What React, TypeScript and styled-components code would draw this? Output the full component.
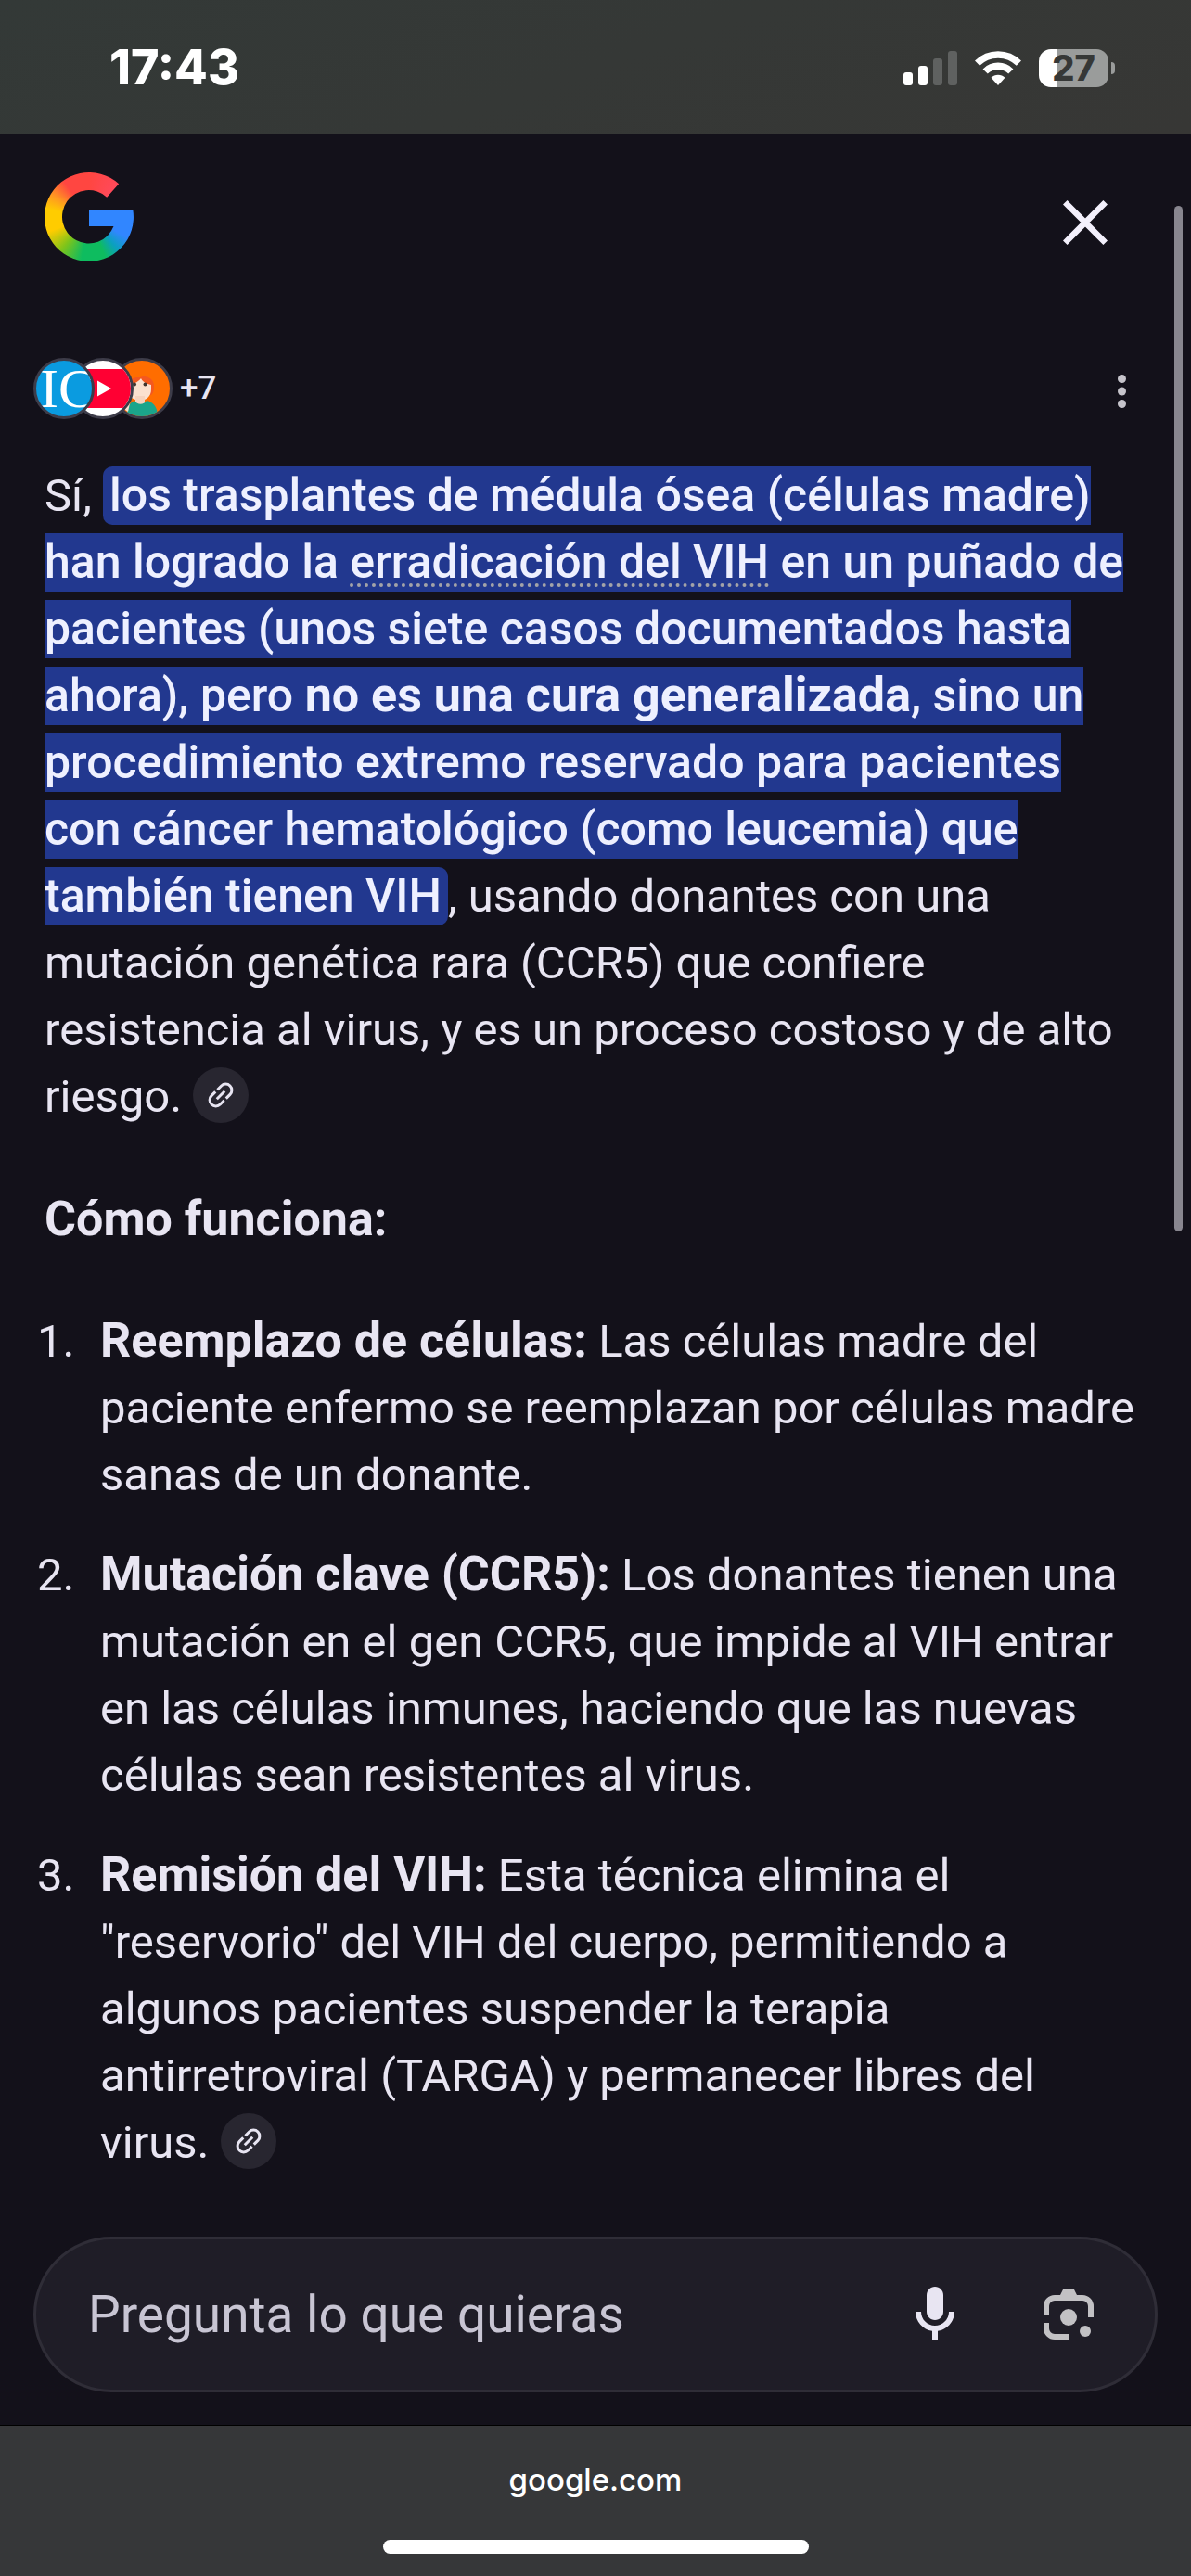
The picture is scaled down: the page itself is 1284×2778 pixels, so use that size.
import React from "react";
import styled, { createGlobalStyle } from "styled-components";

const SANS = `Roboto, "Noto Sans", "Liberation Sans", sans-serif`;
const SYSTEM = `Inter, "Liberation Sans", sans-serif`;
const INK = "#e8e5f2";
const BG = "#13111a";

const GlobalStyle = createGlobalStyle`
  *, *::before, *::after { box-sizing: border-box; }
  body { margin: 0; background: ${BG}; }
  button { padding: 0; border: 0; background: none; cursor: pointer; }
  svg { display: block; }
`;

const Page = styled.div`
  position: relative;
  display: flex;
  flex-direction: column;
  min-height: 100vh;
  background: ${BG};
  color: ${INK};
  font-family: ${SANS};
`;

const StatusBar = styled.div`
  display: flex;
  align-items: center;
  justify-content: space-between;
  height: 144px;
  padding: 2px 82px 0 118px;
  background: linear-gradient(160deg, #333937, #373735);
  color: #fff;
  font-family: ${SYSTEM};
`;

const Clock = styled.time`
  font-size: 52px;
  line-height: 60px;
  font-weight: 800;
`;

const StatusIcons = styled.div`
  display: flex;
  align-items: center;
  gap: 19px;
`;

const Battery = styled.div`
  display: flex;
  align-items: center;
  gap: 3px;
`;

const BatteryBody = styled.div`
  display: flex;
  align-items: center;
  justify-content: center;
  width: 75px;
  height: 41px;
  border-radius: 13px;
  background: linear-gradient(90deg, #fff 20px, #9a9c9b 20px);
  color: #363837;
  font-size: 38px;
  line-height: 41px;
  font-weight: 800;
`;

const BatteryCap = styled.span`
  width: 4px;
  height: 13px;
  border-radius: 0 6px 6px 0;
  background: #9a9c9b;
`;

const Header = styled.header`
  display: flex;
  align-items: flex-end;
  justify-content: space-between;
  padding: 42px 72px 0 48px;
`;

const GoogleMark = styled.a`
  display: block;
  width: 96px;
  height: 96px;
  clip-path: path("M80.100 12.300A48 48 0 1 0 95.300 40H48V58H74.500A28.700 28.700 0 1 1 67.200 26.700Z");
  background:
    linear-gradient(#3186ff, #3186ff) 48px 40px / 30px 18px no-repeat,
    conic-gradient(#ff4641 0deg, #ff4a5c 45deg, #3186ff 60deg, #3186ff 118deg,
      #0ba0c0 138deg, #0ebc5f 158deg, #0ebc5f 190deg, #7fc41a 220deg,
      #ffcc00 250deg, #ffcc00 280deg, #ff9a20 300deg, #ff4641 325deg, #ff4641 360deg);
`;

const IconButton = styled.button<{ $size: number; $color?: string }>`
  display: flex;
  align-items: center;
  justify-content: center;
  flex: none;
  width: ${(p) => p.$size}px;
  height: ${(p) => p.$size}px;
  color: ${(p) => p.$color ?? INK};
`;

const Sources = styled.div`
  display: flex;
  align-items: flex-end;
  justify-content: space-between;
  padding: 104px 45px 0 36px;
`;

const SourceGroup = styled.button`
  display: flex;
  align-items: center;
  color: ${INK};
  font-family: ${SANS};
`;

const Avatar = styled.span<{ $bg: string; $order: number }>`
  position: relative;
  z-index: ${(p) => p.$order};
  display: flex;
  align-items: center;
  width: 66px;
  height: 66px;
  margin-right: -24px;
  border: 3px solid #3d3c49;
  border-radius: 50%;
  overflow: hidden;
  background: ${(p) => p.$bg};
`;

const Monogram = styled.span`
  padding-left: 4px;
  color: #fff;
  font-family: "Liberation Serif", serif;
  font-size: 60px;
  line-height: 60px;
`;

const MoreCount = styled.span`
  margin-left: 32px;
  font-size: 35px;
  line-height: 42px;
  font-weight: 500;
`;

const Answer = styled.main`
  flex: 1;
  padding: 47px 48px 65px;
  font-size: 49px;
  line-height: 72px;
`;

const Paragraph = styled.p`
  margin: 0;
`;

const Highlight = styled.mark`
  padding: 2px 7px 3px;
  border-radius: 10px;
  background: #22388f;
  color: #eef0ff;
  font-size: 50px;
  line-height: 1;
  font-weight: 500;
`;

const Term = styled.a`
  color: inherit;
  text-decoration: underline dotted #a3a3a8 4px;
  text-underline-offset: 6px;
  text-decoration-skip-ink: none;
`;

const Strong = styled.strong`
  font-size: 52px;
  line-height: 1;
  font-weight: 700;
`;

const Heading = styled.h2`
  margin: 60px 0;
  font-size: 52px;
  line-height: 72px;
  font-weight: 700;
`;

const Steps = styled.ol`
  display: flex;
  flex-direction: column;
  gap: 36px;
  margin: 0 0 0 -8px;
  padding: 0;
  list-style: none;
  counter-reset: step;
`;

const Step = styled.li`
  display: grid;
  grid-template-columns: 68px 1fr;
  counter-increment: step;

  &::before { content: counter(step) "."; }
`;

const LinkChip = styled.button`
  display: inline-flex;
  align-items: center;
  justify-content: center;
  width: 60px;
  height: 60px;
  margin: -6px 0;
  border-radius: 50%;
  background: #282630;
  color: ${INK};
  vertical-align: baseline;
`;

const Composer = styled.form`
  display: flex;
  align-items: center;
  height: 168px;
  margin: 0 36px 36px;
  padding: 0 57px 0 56px;
  border: 3px solid #2f2d37;
  border-radius: 84px;
  background: #1f1d27;
`;

const Question = styled.input`
  flex: 1;
  min-width: 0;
  padding: 0;
  border: 0;
  outline: 0;
  background: none;
  color: ${INK};
  font: 400 55px/72px ${SANS};

  &::placeholder { color: #c8c5d3; opacity: 1; }
`;

const ComposerActions = styled.div`
  display: flex;
  gap: 72px;
`;

const BrowserBar = styled.footer`
  display: flex;
  flex-direction: column;
  align-items: center;
  justify-content: space-between;
  height: 162px;
  padding: 38px 0 24px;
  background: #363739;
  box-shadow: 0 -1px 0 #000;
  color: #fff;
  font: 500 33px/40px ${SYSTEM};
`;

const HomeIndicator = styled.span`
  width: 459px;
  height: 15px;
  border-radius: 8px;
  background: #fff;
`;

const ScrollThumb = styled.div`
  position: absolute;
  top: 222px;
  right: 9px;
  width: 9px;
  height: 1106px;
  border-radius: 5px;
  background: #88868f;
`;

const CitationChip = () => (
  <LinkChip type="button" aria-label="Ver enlaces relacionados">
    <svg width="36" height="36" viewBox="0 0 24 24" fill="none" stroke="currentColor" strokeWidth="2">
      <g transform="rotate(-45 12 12)">
        <path d="M11 7.6H7a4.4 4.4 0 0 0 0 8.8h4M13 7.6h4a4.4 4.4 0 0 1 0 8.8h-4M8 12h8" />
      </g>
    </svg>
  </LinkChip>
);

const SignalIcon = () => (
  <svg width="58" height="37" viewBox="0 0 58 37" fill="#fff" aria-hidden="true">
    <rect x="0" y="23" width="10" height="14" rx="3" />
    <rect x="16" y="16" width="10" height="21" rx="3" />
    <rect x="32" y="8" width="10" height="29" rx="3" fill="#5f6160" />
    <rect x="48" y="0" width="10" height="37" rx="3" fill="#5f6160" />
  </svg>
);

const WifiIcon = () => (
  <svg width="50" height="37" viewBox="0 0 50 37" fill="none" stroke="#fff" aria-hidden="true">
    <path d="M2.6 13.2C15 .9 35 .9 47.4 13.2" strokeWidth="7.4" />
    <path d="M11.2 22C18.8 14.400 31.200 14.400 38.800 22" strokeWidth="7.4" />
    <path d="M25 37l-7.500-8.200c4-4 11-4 15 0z" fill="#fff" stroke="none" />
  </svg>
);

const YouTubePicture = () => (
  <svg width="60" height="60" viewBox="0 0 60 60" aria-hidden="true">
    <rect x="-4" y="9" width="68" height="42" rx="8" fill="#ff0033" />
    <path d="M24 21.500v17L39 30z" fill="#fff" />
  </svg>
);

const PersonPicture = () => (
  <svg width="60" height="60" viewBox="0 0 60 60" aria-hidden="true">
    <path d="M13 40C10 24 18 17 28 18c6-3 16 1 15 11 0 4-1 6-3 8z" fill="#f4581f" />
    <path d="M15 26c5 0 11-3 14-7 2 4 6 6 11 7v5c0 8-6 12-12 12s-13-4-13-11z" fill="#fbe0cf" />
    <path d="M23 38h10v10H23z" fill="#f6d3bf" />
    <path d="M14 60c-1-9 3-15 8-17 3 5 10 5 13 0 6 1 12 6 12 17z" fill="#1ba58b" />
    <path d="M12 42l5 4-2 9-6-4z" fill="#fbe0cf" />
    <circle cx="22" cy="25.500" r="2" fill="#40352f" />
    <circle cx="33.500" cy="25.500" r="2" fill="#40352f" />
  </svg>
);

const CloseIcon = () => (
  <svg width="48" height="48" viewBox="0 0 48 48" stroke="#f3f0fc" strokeWidth="6.500" aria-hidden="true">
    <path d="M2.300 2.300l43.400 43.400M45.700 2.300L2.300 45.700" />
  </svg>
);

const DotsIcon = () => (
  <svg width="9" height="36" viewBox="0 0 9 36" fill="currentColor" aria-hidden="true">
    <circle cx="4.500" cy="4.500" r="4.500" />
    <circle cx="4.500" cy="18" r="4.500" />
    <circle cx="4.500" cy="31.500" r="4.500" />
  </svg>
);

const MicIcon = () => (
  <svg width="72" height="72" viewBox="0 0 24 24" fill="currentColor" aria-hidden="true">
    <path d="M12 14c1.660 0 3-1.340 3-3V5c0-1.660-1.340-3-3-3S9 3.340 9 5v6c0 1.660 1.340 3 3 3z" />
    <path d="M17 11c0 2.760-2.240 5-5 5s-5-2.240-5-5H5c0 3.530 2.610 6.430 6 6.920V21h2v-3.080c3.390-.49 6-3.390 6-6.920h-2z" />
  </svg>
);

const LensIcon = () => (
  <svg width="72" height="72" viewBox="0 0 24 24" fill="currentColor" aria-hidden="true">
    <circle cx="12" cy="13" r="3" />
    <circle cx="18" cy="18" r="2" />
    <path d="M9 5l1-2h4l1 2h2a4 4 0 0 1 4 4v4h-2V9a2 2 0 0 0-2-2H7a2 2 0 0 0-2 2v3H3V9a4 4 0 0 1 4-4z" />
    <path d="M3 15h2v2a2 2 0 0 0 2 2h5v2H7a4 4 0 0 1-4-4z" />
  </svg>
);

export default function App() {
  return (
    <Page>
      <GlobalStyle />
      <StatusBar>
        <Clock>17:43</Clock>
        <StatusIcons>
          <SignalIcon />
          <WifiIcon />
          <Battery>
            <BatteryBody>27</BatteryBody>
            <BatteryCap />
          </Battery>
        </StatusIcons>
      </StatusBar>

      <Header>
        <GoogleMark href="#inicio" aria-label="Google" />
        <IconButton $size={84} type="button" aria-label="Cerrar">
          <CloseIcon />
        </IconButton>
      </Header>

      <Sources>
        <SourceGroup type="button" aria-label="Fuentes, 7 más">
          <Avatar $bg="#0a9be0" $order={3}><Monogram>IC</Monogram></Avatar>
          <Avatar $bg="#fff" $order={2}><YouTubePicture /></Avatar>
          <Avatar $bg="#ff6d00" $order={1}><PersonPicture /></Avatar>
          <MoreCount>+7</MoreCount>
        </SourceGroup>
        <IconButton $size={60} $color="#c6c4cb" type="button" aria-label="Más opciones">
          <DotsIcon />
        </IconButton>
      </Sources>

      <Answer>
        <Paragraph>
          Sí,{" "}
          <Highlight>
            los trasplantes de médula ósea (células madre) han logrado la{" "}
            <Term href="#erradicacion">erradicación del VIH</Term> en un puñado de
            pacientes (unos siete casos documentados hasta ahora), pero{" "}
            <Strong>no es una cura generalizada</Strong>, sino un procedimiento
            extremo reservado para pacientes con&nbsp;cáncer hematológico (como
            leucemia) que también tienen VIH
          </Highlight>
          , usando donantes con una mutación genética rara (CCR5) que confiere
          resistencia al virus, y es un proceso costoso y de alto riesgo.{" "}
          <CitationChip />
        </Paragraph>

        <Heading>Cómo funciona:</Heading>

        <Steps>
          <Step>
            <Paragraph>
              <Strong>Reemplazo de células:</Strong> Las células madre del
              paciente enfermo se reemplazan por células madre sanas de un
              donante.
            </Paragraph>
          </Step>
          <Step>
            <Paragraph>
              <Strong>Mutación clave (CCR5):</Strong> Los donantes tienen una
              mutación en el gen CCR5, que impide al VIH entrar en las células
              inmunes, haciendo que las nuevas células sean resistentes al virus.
            </Paragraph>
          </Step>
          <Step>
            <Paragraph>
              <Strong>Remisión del VIH:</Strong> Esta técnica elimina el
              "reservorio" del VIH del cuerpo, permitiendo a algunos pacientes
              suspender la terapia antirretroviral (TARGA) y permanecer libres
              del virus. <CitationChip />
            </Paragraph>
          </Step>
        </Steps>
      </Answer>

      <Composer onSubmit={(e) => e.preventDefault()}>
        <Question aria-label="Pregunta lo que quieras" placeholder="Pregunta lo que quieras" />
        <ComposerActions>
          <IconButton $size={72} type="button" aria-label="Búsqueda por voz">
            <MicIcon />
          </IconButton>
          <IconButton $size={72} $color="#c2c1c4" type="button" aria-label="Búsqueda con Lens">
            <LensIcon />
          </IconButton>
        </ComposerActions>
      </Composer>

      <BrowserBar>
        google.com
        <HomeIndicator />
      </BrowserBar>
      <ScrollThumb />
    </Page>
  );
}
